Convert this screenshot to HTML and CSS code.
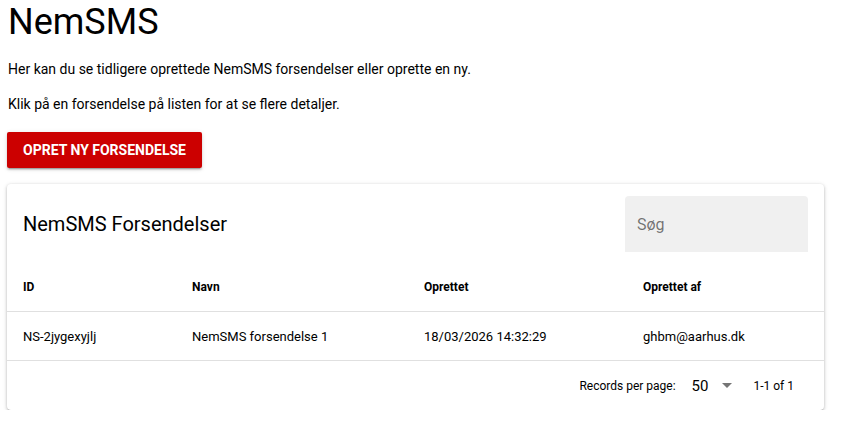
FILE: index.html
```html
<!DOCTYPE html>
<html lang="da">
<head>
    <meta charset="UTF-8">
    <meta name="viewport" content="width=device-width, initial-scale=1.0">
    <title>NemSMS</title>
    <link rel="stylesheet" href="styles.css">
</head>
<body>

<div class="page">
    <h1 class="page-title">NemSMS</h1>
    <p class="intro">Her kan du se tidligere oprettede NemSMS forsendelser eller oprette en ny.</p>
    <p class="intro">Klik på en forsendelse på listen for at se flere detaljer.</p>

    <button class="btn-primary" type="button">Opret ny forsendelse</button>

    <!-- Forsendelser -->
    <div class="card">
        <div class="card-title">
            <span class="card-heading">NemSMS Forsendelser</span>
            <div class="search-field">Søg</div>
        </div>

        <div class="table">
            <div class="table-row table-head">
                <div class="cell">ID</div>
                <div class="cell">Navn</div>
                <div class="cell">Oprettet</div>
                <div class="cell">Oprettet af</div>
            </div>
            <div class="table-row">
                <div class="cell">NS-2jygexyjlj</div>
                <div class="cell">NemSMS forsendelse 1</div>
                <div class="cell">18/03/2026 14:32:29</div>
                <div class="cell">ghbm@aarhus.dk</div>
            </div>
        </div>

        <div class="table-footer">
            <span class="per-page-label">Records per page:</span>
            <span class="per-page-select">
                50
                <span class="caret"></span>
            </span>
            <span class="page-info">1-1 of 1</span>
        </div>
    </div>
</div>

</body>
</html>
```

FILE: styles.css
```css
/* Page */
body {
    margin: 0;
    font-family: Roboto, "Liberation Sans", sans-serif;
    color: rgba(0, 0, 0, 0.87);
    background-color: #fff;
}

.page {
    padding: 0 24px 0 7px;
}

.page-title {
    font-size: 36px;
    font-weight: 400;
    line-height: 40px;
    margin: 2px 0 0 1px;
    color: #000;
}

.intro {
    font-size: 14px;
    line-height: 20px;
    margin: 17px 0 0 1px;
    color: #000;
}

.intro + .intro {
    margin-top: 15px;
}

/* Button */
.btn-primary {
    display: block;
    margin-top: 18px;
    height: 36px;
    padding: 0 16px;
    border: none;
    border-radius: 2px;
    background-color: #cc0000;
    color: #fff;
    font-family: inherit;
    font-size: 14px;
    font-weight: 700;
    white-space: nowrap;
    text-transform: uppercase;
    box-shadow: 0 3px 1px -2px rgba(0, 0, 0, 0.2), 0 2px 2px 0 rgba(0, 0, 0, 0.14), 0 1px 5px 0 rgba(0, 0, 0, 0.12);
    cursor: pointer;
}

/* Card */
.card {
    margin-top: 16px;
    width: 817px;
    border-radius: 4px;
    background-color: #fff;
    box-shadow: 0 2px 1px -1px rgba(0, 0, 0, 0.22), 0 1px 3px 0 rgba(0, 0, 0, 0.2), 0 1px 5px 0 rgba(0, 0, 0, 0.12);
}

.card-title {
    display: flex;
    align-items: center;
    justify-content: space-between;
    padding: 12px 16px 11px 16px;
}

.card-heading {
    font-size: 20px;
    color: #000;
}

.search-field {
    width: 171px;
    height: 56px;
    padding-left: 12px;
    display: flex;
    align-items: center;
    background-color: #f0f0f0;
    border-radius: 4px 4px 0 0;
    color: rgba(0, 0, 0, 0.54);
    font-size: 16px;
}

/* Table */
.table-row {
    display: grid;
    grid-template-columns: 169px 232px 219px 197px;
    height: 48px;
    align-items: center;
    border-bottom: 1px solid #e0e0e0;
    font-size: 13px;
    color: #000;
}

.table-head {
    font-size: 12px;
    font-weight: 700;
}

.cell {
    padding-left: 16px;
}

/* Footer */
.table-footer {
    display: flex;
    align-items: center;
    justify-content: flex-end;
    height: 49px;
    padding-right: 30px;
    font-size: 12px;
    color: #000;
}

.per-page-select {
    display: flex;
    align-items: center;
    margin-left: 16px;
    font-size: 15px;
}

.caret {
    margin-left: 14px;
    width: 0;
    height: 0;
    border-left: 5px solid transparent;
    border-right: 5px solid transparent;
    border-top: 5px solid #757575;
}

.page-info {
    margin-left: 21px;
    font-size: 12px;
}
```
